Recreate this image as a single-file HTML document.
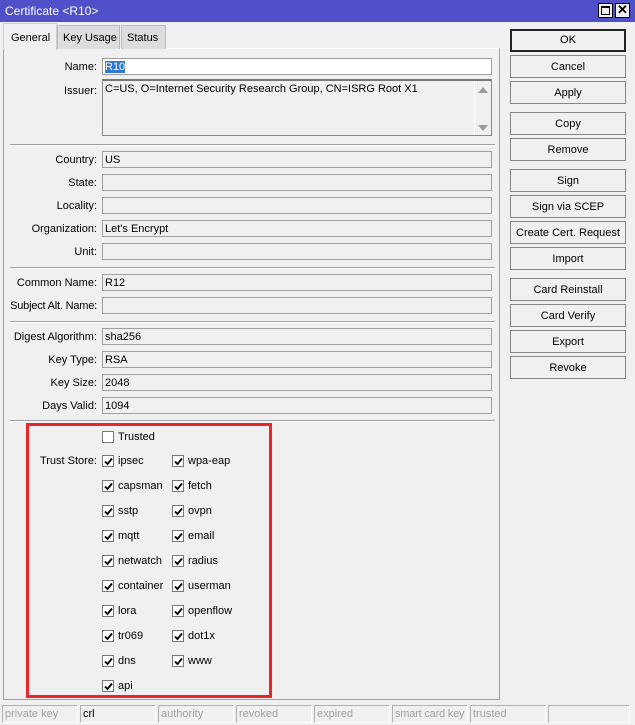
<!DOCTYPE html>
<html><head><style>
*{box-sizing:border-box;margin:0;padding:0}
body{width:635px;height:725px;background:#f0f0f0;font-family:"Liberation Sans",sans-serif;font-size:11px;color:#000;position:relative;overflow:hidden;white-space:nowrap}
.a{position:absolute}
.title{left:0;top:0;width:635px;height:22px;background:#5050c8;color:#fff;font-size:12px;padding:4px 5px}
.tb{top:3px;width:15px;height:15px;background:#f0f0f0;border:1px solid #000}
.tab{top:25px;height:24px;border:1px solid #bbb;border-bottom:none;background:#ddd;padding:6px 5px}
.panel{left:3px;top:48px;width:497px;height:652px;border:1px solid #a0a0a0;border-top-color:#fff}
.lbl{width:97px;text-align:right;left:0;margin-top:1px}
.f{left:102px;width:390px;height:17px;border:1px solid #a0a0a0;background:#f0f0f0;padding:2px 2px 0}
.sep{left:10px;width:485px;height:2px;border-top:1px solid #a0a0a0;border-bottom:1px solid #fff}
.btn{left:510px;width:116px;height:23px;border:1px solid #888;background:#f0f0f0;text-align:center;line-height:23px}
.cb{width:12px;height:12px;border:1px solid #777;background:#fff}
.cb svg{position:absolute;left:1px;top:1px}
.cb + .a{margin-top:1px}
.st{top:705px;height:18px;border:1px solid #b0b0b0;border-right-color:#fff;border-bottom-color:#fff;color:#a0a0a0;padding:2px 2px;overflow:hidden}
</style></head><body>
<div class="a title">Certificate &lt;R10&gt;</div>
<div class="a tb" style="left:598px"><div class="a" style="left:2px;top:2px;width:9px;height:9px;border:1px solid #000;border-top-width:2px"></div></div>
<div class="a tb" style="left:615px;text-align:center;font-weight:bold;line-height:12px;font-size:13px">✕</div>
<div class="a panel"></div>
<div class="a tab" style="left:3px;top:23px;width:54px;height:27px;background:#f0f0f0;border-color:#ccc;padding:8px 7px">General</div>
<div class="a tab" style="left:57px;width:63px">Key Usage</div>
<div class="a tab" style="left:121px;width:45px">Status</div>

<div class="a lbl" style="top:60px">Name:</div>
<div class="a f" style="top:58px;background:#fff"><span style="background:#3277d7;color:#fff">R10</span></div>
<div class="a lbl" style="top:84px">Issuer:</div>
<div class="a f" style="top:79px;height:57px;border-color:#888;border-top:2px solid #777;padding:2px 2px">C=US, O=Internet Security Research Group, CN=ISRG Root X1
<div class="a" style="left:371px;top:0;width:1px;height:54px;background:#fff"></div>
<div class="a" style="left:375px;top:6px;width:0;height:0;border:5px solid transparent;border-bottom:6px solid #999;border-top:none"></div>
<div class="a" style="left:375px;top:44px;width:0;height:0;border:5px solid transparent;border-top:6px solid #999;border-bottom:none"></div>
</div>
<div class="a sep" style="top:144px"></div>
<div class="a lbl" style="top:153px">Country:</div><div class="a f" style="top:151px">US</div>
<div class="a lbl" style="top:176px">State:</div><div class="a f" style="top:174px"></div>
<div class="a lbl" style="top:199px">Locality:</div><div class="a f" style="top:197px"></div>
<div class="a lbl" style="top:222px">Organization:</div><div class="a f" style="top:220px">Let's Encrypt</div>
<div class="a lbl" style="top:245px">Unit:</div><div class="a f" style="top:243px"></div>
<div class="a sep" style="top:267px"></div>
<div class="a lbl" style="top:276px">Common Name:</div><div class="a f" style="top:274px">R12</div>
<div class="a lbl" style="top:299px;letter-spacing:-0.2px">Subject Alt. Name:</div><div class="a f" style="top:297px"></div>
<div class="a sep" style="top:321px"></div>
<div class="a lbl" style="top:330px">Digest Algorithm:</div><div class="a f" style="top:328px">sha256</div>
<div class="a lbl" style="top:353px">Key Type:</div><div class="a f" style="top:351px">RSA</div>
<div class="a lbl" style="top:376px">Key Size:</div><div class="a f" style="top:374px">2048</div>
<div class="a lbl" style="top:399px">Days Valid:</div><div class="a f" style="top:397px">1094</div>
<div class="a sep" style="top:420px"></div>

<div class="a" style="left:26px;top:423px;width:246px;height:275px;border:3px solid #e8262c"></div>
<div class="a cb" style="left:102px;top:431px"></div><div class="a" style="left:118px;top:430px">Trusted</div>
<div class="a lbl" style="top:454px">Trust Store:</div>

<div class="a btn" style="top:29px;border:2px solid #222;line-height:19px">OK</div>
<div class="a btn" style="top:55px">Cancel</div>
<div class="a btn" style="top:81px">Apply</div>
<div class="a btn" style="top:112px">Copy</div>
<div class="a btn" style="top:138px">Remove</div>
<div class="a btn" style="top:169px">Sign</div>
<div class="a btn" style="top:195px">Sign via SCEP</div>
<div class="a btn" style="top:221px">Create Cert. Request</div>
<div class="a btn" style="top:247px">Import</div>
<div class="a btn" style="top:278px">Card Reinstall</div>
<div class="a btn" style="top:304px">Card Verify</div>
<div class="a btn" style="top:330px">Export</div>
<div class="a btn" style="top:356px">Revoke</div>

<div class="a st" style="left:2px;width:76px">private key</div>
<div class="a st" style="left:80px;width:76px;color:#000">crl</div>
<div class="a st" style="left:158px;width:76px">authority</div>
<div class="a st" style="left:236px;width:76px">revoked</div>
<div class="a st" style="left:314px;width:76px">expired</div>
<div class="a st" style="left:392px;width:76px;letter-spacing:-0.2px">smart card key</div>
<div class="a st" style="left:470px;width:76px">trusted</div>
<div class="a st" style="left:548px;width:82px"></div>

<div class="a cb" style="left:102px;top:455px"><svg width="9" height="9"><path d="M1 4.5 L3.5 7 L8 1.5" stroke="#000" stroke-width="1.8" fill="none"/></svg></div><div class="a" style="left:118px;top:454px">ipsec</div>
<div class="a cb" style="left:172px;top:455px"><svg width="9" height="9"><path d="M1 4.5 L3.5 7 L8 1.5" stroke="#000" stroke-width="1.8" fill="none"/></svg></div><div class="a" style="left:188px;top:454px">wpa-eap</div>
<div class="a cb" style="left:102px;top:480px"><svg width="9" height="9"><path d="M1 4.5 L3.5 7 L8 1.5" stroke="#000" stroke-width="1.8" fill="none"/></svg></div><div class="a" style="left:118px;top:479px">capsman</div>
<div class="a cb" style="left:172px;top:480px"><svg width="9" height="9"><path d="M1 4.5 L3.5 7 L8 1.5" stroke="#000" stroke-width="1.8" fill="none"/></svg></div><div class="a" style="left:188px;top:479px">fetch</div>
<div class="a cb" style="left:102px;top:505px"><svg width="9" height="9"><path d="M1 4.5 L3.5 7 L8 1.5" stroke="#000" stroke-width="1.8" fill="none"/></svg></div><div class="a" style="left:118px;top:504px">sstp</div>
<div class="a cb" style="left:172px;top:505px"><svg width="9" height="9"><path d="M1 4.5 L3.5 7 L8 1.5" stroke="#000" stroke-width="1.8" fill="none"/></svg></div><div class="a" style="left:188px;top:504px">ovpn</div>
<div class="a cb" style="left:102px;top:530px"><svg width="9" height="9"><path d="M1 4.5 L3.5 7 L8 1.5" stroke="#000" stroke-width="1.8" fill="none"/></svg></div><div class="a" style="left:118px;top:529px">mqtt</div>
<div class="a cb" style="left:172px;top:530px"><svg width="9" height="9"><path d="M1 4.5 L3.5 7 L8 1.5" stroke="#000" stroke-width="1.8" fill="none"/></svg></div><div class="a" style="left:188px;top:529px">email</div>
<div class="a cb" style="left:102px;top:555px"><svg width="9" height="9"><path d="M1 4.5 L3.5 7 L8 1.5" stroke="#000" stroke-width="1.8" fill="none"/></svg></div><div class="a" style="left:118px;top:554px">netwatch</div>
<div class="a cb" style="left:172px;top:555px"><svg width="9" height="9"><path d="M1 4.5 L3.5 7 L8 1.5" stroke="#000" stroke-width="1.8" fill="none"/></svg></div><div class="a" style="left:188px;top:554px">radius</div>
<div class="a cb" style="left:102px;top:580px"><svg width="9" height="9"><path d="M1 4.5 L3.5 7 L8 1.5" stroke="#000" stroke-width="1.8" fill="none"/></svg></div><div class="a" style="left:118px;top:579px">container</div>
<div class="a cb" style="left:172px;top:580px"><svg width="9" height="9"><path d="M1 4.5 L3.5 7 L8 1.5" stroke="#000" stroke-width="1.8" fill="none"/></svg></div><div class="a" style="left:188px;top:579px">userman</div>
<div class="a cb" style="left:102px;top:605px"><svg width="9" height="9"><path d="M1 4.5 L3.5 7 L8 1.5" stroke="#000" stroke-width="1.8" fill="none"/></svg></div><div class="a" style="left:118px;top:604px">lora</div>
<div class="a cb" style="left:172px;top:605px"><svg width="9" height="9"><path d="M1 4.5 L3.5 7 L8 1.5" stroke="#000" stroke-width="1.8" fill="none"/></svg></div><div class="a" style="left:188px;top:604px">openflow</div>
<div class="a cb" style="left:102px;top:630px"><svg width="9" height="9"><path d="M1 4.5 L3.5 7 L8 1.5" stroke="#000" stroke-width="1.8" fill="none"/></svg></div><div class="a" style="left:118px;top:629px">tr069</div>
<div class="a cb" style="left:172px;top:630px"><svg width="9" height="9"><path d="M1 4.5 L3.5 7 L8 1.5" stroke="#000" stroke-width="1.8" fill="none"/></svg></div><div class="a" style="left:188px;top:629px">dot1x</div>
<div class="a cb" style="left:102px;top:655px"><svg width="9" height="9"><path d="M1 4.5 L3.5 7 L8 1.5" stroke="#000" stroke-width="1.8" fill="none"/></svg></div><div class="a" style="left:118px;top:654px">dns</div>
<div class="a cb" style="left:172px;top:655px"><svg width="9" height="9"><path d="M1 4.5 L3.5 7 L8 1.5" stroke="#000" stroke-width="1.8" fill="none"/></svg></div><div class="a" style="left:188px;top:654px">www</div>
<div class="a cb" style="left:102px;top:680px"><svg width="9" height="9"><path d="M1 4.5 L3.5 7 L8 1.5" stroke="#000" stroke-width="1.8" fill="none"/></svg></div><div class="a" style="left:118px;top:679px">api</div>
</body></html>
